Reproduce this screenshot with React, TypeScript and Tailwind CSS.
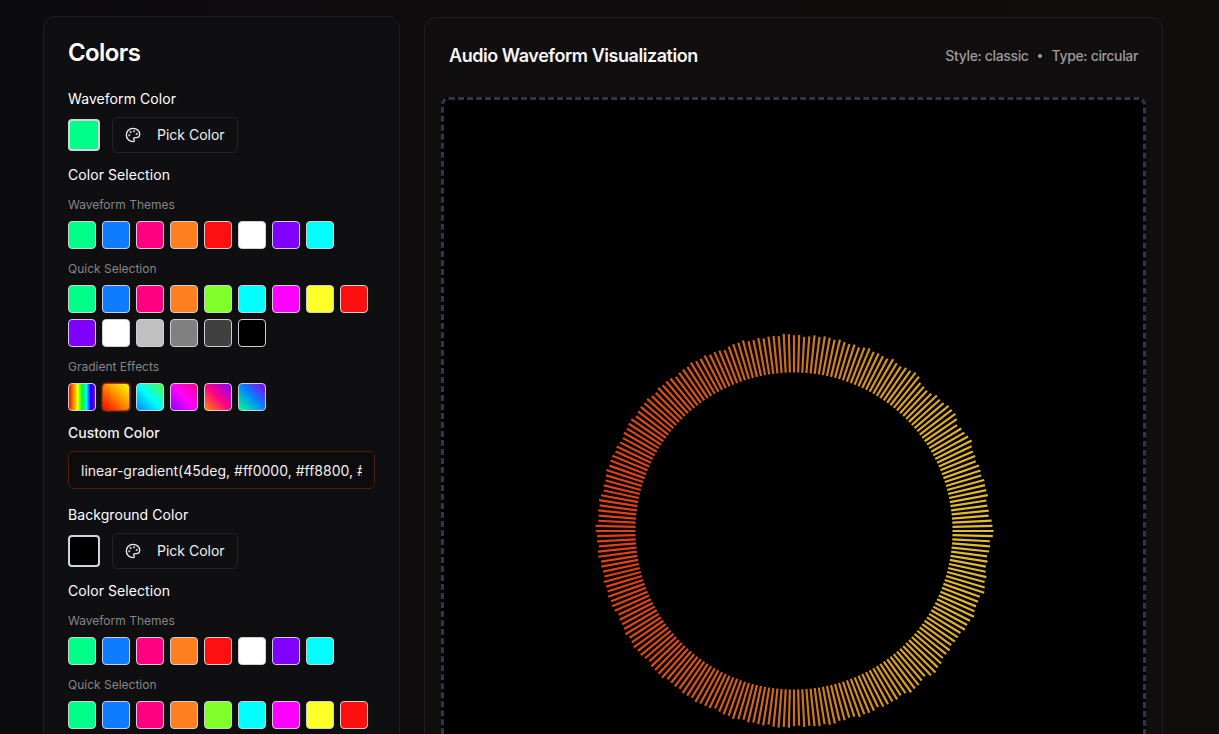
import { Palette } from "lucide-react";

const themes = ["#00ff88", "#0f7bff", "#ff0080", "#ff8020", "#ff1010", "#ffffff", "#8000ff", "#00ffff"];
const quick = [
  "#00ff88", "#0f7bff", "#ff0080", "#ff8020", "#80ff2a", "#00ffff", "#ff00ff", "#ffff2a", "#ff1010",
  "#8000ff", "#ffffff", "#c0c0c0", "#808080", "#404040", "#000000",
];
const gradients = [
  { cls: "bg-[linear-gradient(90deg,#ff0000,#ff8800,#ffff00,#00ff00,#00ffff,#0000ff,#8800ff)]" },
  { cls: "bg-[linear-gradient(45deg,#ff0000,#ff8800,#ffff00)]", selected: true },
  { cls: "bg-[linear-gradient(45deg,#0088ff,#00ffff,#44ff44)]" },
  { cls: "bg-[linear-gradient(45deg,#8800ff,#ff00ff,#ff0088)]" },
  { cls: "bg-[linear-gradient(45deg,#ff8800,#ff0088,#8800ff)]" },
  { cls: "bg-[linear-gradient(45deg,#00ff88,#0088ff,#8800ff)]" },
];

function Swatch({ color }: { color: string }) {
  return (
    <button
      className="w-7 h-7 rounded-[4px] border border-[#cdd0d4]"
      style={{ backgroundColor: color }}
    />
  );
}

function SwatchGroup({ title, colors }: { title: string; colors: string[] }) {
  return (
    <div>
      <p className="text-xs leading-4 text-[#858585] mb-2">{title}</p>
      <div className="flex flex-wrap gap-1.5 w-[300px]">
        {colors.map((c, i) => (
          <Swatch key={i} color={c} />
        ))}
      </div>
    </div>
  );
}

function ColorSelection({ withGradients }: { withGradients?: boolean }) {
  return (
    <div className="mt-3">
      <p className="text-sm leading-5 font-normal tracking-[0.005em] text-white mb-3">Color Selection</p>
      <div className="space-y-3">
        <SwatchGroup title="Waveform Themes" colors={themes} />
        <SwatchGroup title="Quick Selection" colors={quick} />
        {withGradients && (
          <div>
            <p className="text-xs leading-4 text-[#858585] mb-2">Gradient Effects</p>
            <div className="flex gap-1.5">
              {gradients.map((g, i) => (
                <button
                  key={i}
                  className={
                    g.selected
                      ? `w-7 h-7 rounded-[4px] border border-[#a83c10] shadow-[0_0_2px_#ff4400] ${g.cls}`
                      : `w-7 h-7 rounded-[4px] border border-[#cdd0d4] ${g.cls}`
                  }
                />
              ))}
            </div>
          </div>
        )}
      </div>
    </div>
  );
}

function PickRow({ color }: { color: string }) {
  return (
    <div className="flex items-center gap-3">
      <button
        className="w-8 h-8 rounded-[4px] border-2 border-[#d1d5db]"
        style={{ backgroundColor: color }}
      />
      <button className="h-9 w-[126px] flex items-center pl-3 gap-4 rounded-md border border-[#232224] text-sm text-[#f0f0f0]">
        <Palette size={16} strokeWidth={2} />
        Pick Color
      </button>
    </div>
  );
}

// outer radius of each bar, stable between renders
function barOuter(i: number, n: number) {
  const a = (i / n) * 360;
  let r = 196 + 0.8 * Math.sin(i * 2.3) + 0.7 * Math.sin(i * 0.71 + 1) + 0.4 * Math.sin(i * 5.1);
  const spikes = [
    [-37, 4], [-53, 3], [-60, 2], [-47, -2], [-28, 2], [0, 3], [18, 4], [25, 3],
    [38, -1], [45, 4], [52, 3], [60, 2], [100, 1], [-110, -1], [-140, 2], [180, 3], [143, 2],
  ];
  for (const [at, amt] of spikes) {
    let d = Math.abs(a - ((at + 360) % 360));
    if (d > 180) d = 360 - d;
    if (d < 4) r += amt * (1 - d / 4);
  }
  return r;
}

function lerp(a: number[], b: number[], t: number) {
  return a.map((v, k) => Math.round(v + (b[k] - v) * t));
}

function barColor(x: number) {
  // left to right: red-orange, orange, yellow
  const t = (x + 190) / 380;
  const left = [255, 68, 24];
  const mid = [225, 125, 28];
  const right = [255, 216, 44];
  const c = t < 0.5 ? lerp(left, mid, t * 2) : lerp(mid, right, (t - 0.5) * 2);
  return `rgb(${c[0]},${c[1]},${c[2]})`;
}

function CircularWaveform() {
  const n = 240;
  const inner = 158.5;
  const bars = Array.from({ length: n }, (_, i) => {
    const t = (i / n) * Math.PI * 2;
    const outer = barOuter(i, n);
    const cos = Math.cos(t);
    const sin = Math.sin(t);
    return {
      x1: inner * cos,
      y1: inner * sin,
      x2: outer * cos,
      y2: outer * sin,
      color: barColor(((inner + outer) / 2) * cos),
    };
  });
  return (
    <svg width="420" height="420" viewBox="-210 -210 420 420" className="blur-[0.35px] opacity-90">
      {bars.map((b, i) => (
        <line key={i} x1={b.x1} y1={b.y1} x2={b.x2} y2={b.y2} stroke={b.color} strokeWidth="2.2" />
      ))}
    </svg>
  );
}

export default function App() {
  return (
    <div className="h-screen overflow-hidden bg-[linear-gradient(90deg,#0b0a0c,#120d0d)] font-['Inter',sans-serif]">
      <div className="flex items-start gap-6 w-[1120px] ml-[43px] pt-4">
        <aside className="w-[357px] shrink-0 rounded-xl border border-[#1f1e20] bg-[#0f0e10] px-6 pt-5 pb-6">
          <h2 className="text-2xl leading-8 font-semibold tracking-tight text-white mb-5">Colors</h2>

          <p className="text-sm leading-5 font-normal tracking-[0.005em] text-white mb-2">Waveform Color</p>
          <PickRow color="#00ff88" />
          <ColorSelection withGradients />

          <p className="text-sm leading-5 font-medium text-[#f2f2f2] mt-3 mb-2">Custom Color</p>
          <input
            readOnly
            value="linear-gradient(45deg, #ff0000, #ff8800, #ffff00)"
            className="w-[307px] h-[38px] px-3 rounded-md border border-[#4a1e10] bg-[#0d0b0c] text-sm text-[#f0f0f0] outline-none"
          />

          <p className="text-sm leading-5 font-normal tracking-[0.005em] text-white mt-4 mb-2">Background Color</p>
          <PickRow color="#000000" />
          <ColorSelection />
        </aside>

        <main className="flex-1 mt-px rounded-xl border border-[#1f1e20] bg-[#100e0f] px-4">
          <div className="flex items-center justify-between px-2 h-[76px] mb-[3px]">
            <h1 className="text-lg font-semibold tracking-tight text-[#f5f5f5]">Audio Waveform Visualization</h1>
            <div className="flex items-center gap-2 text-sm font-medium tracking-tight text-[#9c9a98]">
              <span>Style: classic</span>
              <span className="w-1 h-1 ml-px mr-[2px] rounded-full bg-[#9c9a98]" />
              <span>Type: circular</span>
            </div>
          </div>
          <div className="h-[868px] rounded-lg border-[3px] border-dashed border-[#2d3748] bg-black flex items-center justify-center">
            <CircularWaveform />
          </div>
        </main>
      </div>
    </div>
  );
}
